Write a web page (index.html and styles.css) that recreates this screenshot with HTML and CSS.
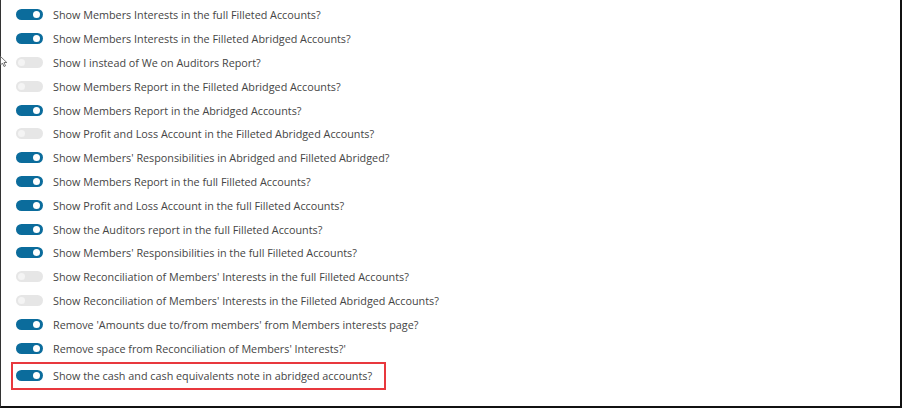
FILE: index.html
```html
<!DOCTYPE html>
<html lang="en">
<head>
    <meta charset="UTF-8">
    <title>Accounts Settings</title>
    <link rel="stylesheet" href="styles.css">
</head>
<body>
    <div class="frame">
        <svg class="cursor" width="8" height="12" viewBox="0 0 8 12">
            <path d="M0.5 0.5 L0.5 9 L2.5 7 L4 10.5 L5.5 9.8 L4 6.5 L6.8 6.5 Z" fill="#fff" stroke="#555" stroke-width="0.8"/>
        </svg>
        <ul class="options">
            <li class="option"><span class="toggle on"></span>Show Members Interests in the full Filleted Accounts?</li>
            <li class="option"><span class="toggle on"></span>Show Members Interests in the Filleted Abridged Accounts?</li>
            <li class="option"><span class="toggle"></span>Show I instead of We on Auditors Report?</li>
            <li class="option"><span class="toggle"></span>Show Members Report in the Filleted Abridged Accounts?</li>
            <li class="option"><span class="toggle on"></span>Show Members Report in the Abridged Accounts?</li>
            <li class="option"><span class="toggle"></span>Show Profit and Loss Account in the Filleted Abridged Accounts?</li>
            <li class="option"><span class="toggle on"></span>Show Members' Responsibilities in Abridged and Filleted Abridged?</li>
            <li class="option"><span class="toggle on"></span>Show Members Report in the full Filleted Accounts?</li>
            <li class="option"><span class="toggle on"></span>Show Profit and Loss Account in the full Filleted Accounts?</li>
            <li class="option"><span class="toggle on"></span>Show the Auditors report in the full Filleted Accounts?</li>
            <li class="option"><span class="toggle on"></span>Show Members' Responsibilities in the full Filleted Accounts?</li>
            <li class="option"><span class="toggle"></span>Show Reconciliation of Members' Interests in the full Filleted Accounts?</li>
            <li class="option"><span class="toggle"></span>Show Reconciliation of Members' Interests in the Filleted Abridged Accounts?</li>
            <li class="option"><span class="toggle on"></span>Remove 'Amounts due to/from members' from Members interests page?</li>
            <li class="option"><span class="toggle on"></span>Remove space from Reconciliation of Members' Interests?'</li>
            <li class="option highlighted"><span class="toggle on"></span>Show the cash and cash equivalents note in abridged accounts?</li>
        </ul>
    </div>
</body>
</html>
```

FILE: styles.css
```css
body {
    margin: 0;
    background-color: white;
    font-family: "Open Sans", Arial, sans-serif;
}
.frame {
    position: relative;
    box-sizing: border-box;
    width: 902px;
    height: 408px;
    border-left: 1px solid #333;
    border-right: 2px solid #111;
    border-bottom: 2px solid #111;
    padding: 3px 0 0 15px;
}
.cursor {
    position: absolute;
    left: -1px;
    top: 56px;
}
.options {
    list-style: none;
    margin: 0;
    padding: 0;
}
.option {
    display: flex;
    align-items: center;
    height: 23.8px;
    font-size: 10.8px;
    font-weight: 500;
    color: #454545;
}
.toggle {
    position: relative;
    flex-shrink: 0;
    width: 27px;
    height: 11px;
    margin-right: 10px;
    border-radius: 6px;
    background-color: #e6e6e6;
}
.toggle::after {
    content: "";
    position: absolute;
    top: 2px;
    left: 2px;
    width: 7px;
    height: 7px;
    border-radius: 50%;
    background-color: #f4f4f4;
}
.toggle.on {
    background-color: #0b6c9c;
}
.toggle.on::after {
    left: auto;
    right: 3px;
    background-color: white;
}
.option.highlighted {
    display: inline-flex;
    height: 24px;
    margin: 2px 0 0 -5px;
    padding: 0 12px 0 3px;
    border: 2px solid #e8383d;
}
```
